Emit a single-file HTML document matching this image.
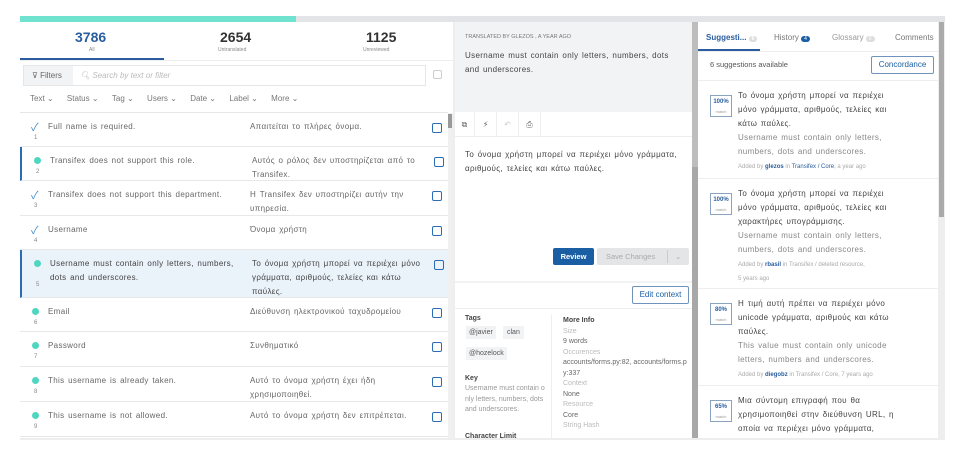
<!DOCTYPE html>
<html><head><meta charset="utf-8"><style>
*{box-sizing:border-box;margin:0;padding:0}
body{width:960px;height:456px;background:#fff;font-family:"Liberation Sans","Noto Sans CJK SC",sans-serif;position:relative;overflow:hidden;color:#555;font-size:8px}
.a{position:absolute}
.t{white-space:nowrap}
.ls{letter-spacing:0.35px;word-spacing:1px}
.row{position:absolute;left:20px;width:428px;border-bottom:1px solid #e8e8e8}
.row .s{position:absolute;left:28px;top:7px;color:#666;font-size:8px;line-height:14px;width:185px;letter-spacing:0.35px;word-spacing:1px}
.row .g{position:absolute;left:230px;top:7px;color:#666;font-size:8px;line-height:14px;width:178px;letter-spacing:0.35px;word-spacing:1px}
.row .n{position:absolute;left:14px;color:#888;font-size:6px}
.row .cb{position:absolute;left:412px;top:10px;width:10px;height:10px;border:1.3px solid #2a6db5;border-radius:2px}
.dot{position:absolute;left:12px;top:10px;width:7px;height:7px;border-radius:50%;background:#4fd6c0}
.chk{position:absolute;left:11px;top:6px;color:#4a90c8;font-size:11px}
.sg{position:absolute;left:698px;width:240px;border-bottom:1px solid #eee}
.sg .b{position:absolute;left:12px;top:14px;width:22px;height:22px;border:1px solid #8aa3c0;font-size:6px;color:#2a5d9f;font-weight:bold;text-align:center;line-height:9px;padding-top:2px}
.sg .x{position:absolute;left:40px;top:8px;width:165px;font-size:8px;line-height:14px;color:#444;letter-spacing:0.35px;word-spacing:1px}
.sg .x .e{color:#888}.sg .x .m{color:#aaa;font-size:6px;line-height:12px;letter-spacing:0;word-spacing:0}
</style></head><body>
<div class="a" style="left:20px;top:16px;width:925px;height:6px;background:#e2e4e8"></div>
<div class="a" style="left:20px;top:16px;width:276px;height:6px;background:#6fe3cf"></div>
<div class="a" style="left:20px;top:438px;width:925px;height:2px;background:#eee"></div>
<div class="a t" style="left:75px;top:29px;font-size:14px;color:#2a5d9f;font-weight:bold">3786</div>
<div class="a t" style="left:89px;top:47px;font-size:5px;color:#888">All</div>
<div class="a t" style="left:220px;top:29px;font-size:14px;color:#333;font-weight:bold">2654</div>
<div class="a t" style="left:218px;top:47px;font-size:5px;color:#888">Untranslated</div>
<div class="a t" style="left:366px;top:29px;font-size:14px;color:#333;font-weight:bold">1125</div>
<div class="a t" style="left:363px;top:47px;font-size:5px;color:#888">Unreviewed</div>
<div class="a" style="left:20px;top:58px;width:144px;height:2px;background:#2a5d9f"></div>
<div class="a" style="left:20px;top:60px;width:433px;height:1px;background:#eee"></div>
<div class="a" style="left:23px;top:65px;width:403px;height:21px;border:1px solid #e6e6e6;background:#fff"></div>
<div class="a t" style="left:24px;top:66px;width:49px;height:19px;background:#f2f3f5;font-size:8px;line-height:19px;padding-left:8px;color:#666">⊽ Filters</div>
<div class="a t" style="left:80px;top:71px;font-size:8px;color:#bbb;font-style:italic">🔍︎ Search by text or filter</div>
<div class="a" style="left:433px;top:70px;width:9px;height:9px;border:1px solid #ccc;border-radius:2px"></div>
<div class="a t" style="left:30px;top:94px;font-size:8px;color:#777">Text ⌄&nbsp;&nbsp;&nbsp;&nbsp;&nbsp;&nbsp;Status ⌄&nbsp;&nbsp;&nbsp;&nbsp;&nbsp;&nbsp;Tag ⌄&nbsp;&nbsp;&nbsp;&nbsp;&nbsp;&nbsp;Users ⌄&nbsp;&nbsp;&nbsp;&nbsp;&nbsp;&nbsp;Date ⌄&nbsp;&nbsp;&nbsp;&nbsp;&nbsp;&nbsp;Label ⌄&nbsp;&nbsp;&nbsp;&nbsp;&nbsp;&nbsp;More ⌄</div>
<div class="a" style="left:20px;top:112px;width:428px;height:1px;background:#e6e6e6"></div>
<div class="row" style="top:113px;height:34px"><span class="chk">✓</span><div class="s">Full name is required.</div><div class="g">Απαιτείται το πλήρες όνομα.</div><div class="n" style="top:22px">1</div><div class="cb"></div></div>
<div class="row" style="top:147px;height:34px;border-left:2px solid #2a6db5"><span class="dot"></span><div class="s">Transifex does not support this role.</div><div class="g">Αυτός ο ρόλος δεν υποστηρίζεται από το Transifex.</div><div class="n" style="top:22px">2</div><div class="cb"></div></div>
<div class="row" style="top:181px;height:35px"><span class="chk">✓</span><div class="s">Transifex does not support this department.</div><div class="g">Η Transifex δεν υποστηρίζει αυτήν την υπηρεσία.</div><div class="n" style="top:22px">3</div><div class="cb"></div></div>
<div class="row" style="top:216px;height:34px"><span class="chk">✓</span><div class="s">Username</div><div class="g">Όνομα χρήστη</div><div class="n" style="top:22px">4</div><div class="cb"></div></div>
<div class="row" style="top:250px;height:48px;background:#eaf2fa;border-left:2px solid #2a6db5"><span class="dot"></span><div class="s" style="color:#444">Username must contain only letters, numbers, dots and underscores.</div><div class="g" style="color:#444">Το όνομα χρήστη μπορεί να περιέχει μόνο γράμματα, αριθμούς, τελείες και κάτω παύλες.</div><div class="n" style="top:32px">5</div><div class="cb"></div></div>
<div class="row" style="top:298px;height:34px"><span class="dot"></span><div class="s">Email</div><div class="g">Διεύθυνση ηλεκτρονικού ταχυδρομείου</div><div class="n" style="top:22px">6</div><div class="cb"></div></div>
<div class="row" style="top:332px;height:35px"><span class="dot"></span><div class="s">Password</div><div class="g">Συνθηματικό</div><div class="n" style="top:22px">7</div><div class="cb"></div></div>
<div class="row" style="top:367px;height:35px"><span class="dot"></span><div class="s">This username is already taken.</div><div class="g">Αυτό το όνομα χρήστη έχει ήδη χρησιμοποιηθεί.</div><div class="n" style="top:22px">8</div><div class="cb"></div></div>
<div class="row" style="top:402px;height:35px"><span class="dot"></span><div class="s">This username is not allowed.</div><div class="g">Αυτό το όνομα χρήστη δεν επιτρέπεται.</div><div class="n" style="top:22px">9</div><div class="cb"></div></div>
<div class="a" style="left:448px;top:113px;width:5px;height:325px;background:#f0f0f0"></div>
<div class="a" style="left:448px;top:114px;width:4px;height:14px;background:#999"></div>
<div class="a" style="left:453px;top:22px;width:2px;height:416px;background:#eee"></div>
<div class="a" style="left:455px;top:22px;width:237px;height:90px;background:#f2f3f5"></div>
<div class="a t" style="left:465px;top:34px;font-size:5.5px;color:#777">TRANSLATED BY GLEZOS , A YEAR AGO</div>
<div class="a ls" style="left:465px;top:49px;width:215px;font-size:8px;line-height:14px;color:#444">Username must contain only letters, numbers, dots and underscores.</div>
<div class="a" style="left:455px;top:112px;width:237px;height:25px;border-bottom:1px solid #eee"></div>
<div class="a t" style="left:455px;top:112px;height:25px;font-size:8px;color:#666;line-height:25px"><span style="display:inline-block;width:20px;text-align:center;border-right:1px solid #eee">⧉</span><span style="display:inline-block;width:22px;text-align:center;border-right:1px solid #eee">⚡︎</span><span style="display:inline-block;width:22px;text-align:center;border-right:1px solid #eee;color:#ccc">↶</span><span style="display:inline-block;width:22px;text-align:center;border-right:1px solid #eee">⎙</span></div>
<div class="a ls" style="left:465px;top:148px;width:215px;font-size:8px;line-height:14px;color:#444">Το όνομα χρήστη μπορεί να περιέχει μόνο γράμματα, αριθμούς, τελείες και κάτω παύλες.</div>
<div class="a t" style="left:553px;top:248px;width:41px;height:17px;background:#1a5fa3;color:#fff;font-size:7.5px;font-weight:bold;text-align:center;line-height:17px;border-radius:2px">Review</div>
<div class="a t" style="left:597px;top:248px;width:92px;height:17px;background:#e4e5e7;color:#aaa;font-size:7.5px;line-height:17px;padding-left:9px;border-radius:2px">Save Changes<span style="position:absolute;left:70px;top:2px;height:13px;border-left:1px solid #ccc;padding-left:7px;line-height:13px">⌄</span></div>
<div class="a" style="left:455px;top:281px;width:237px;height:2px;background:#f2f3f5"></div>
<div class="a t" style="left:632px;top:286px;width:57px;height:18px;border:1px solid #6f93bd;border-radius:2px;color:#1a5fa3;font-size:8px;text-align:center;line-height:16px">Edit context</div>
<div class="a" style="left:455px;top:308px;width:237px;height:1px;background:#eee"></div>
<div class="a" style="left:551px;top:315px;width:1px;height:123px;background:#eee"></div>
<div class="a" style="left:465px;top:315px;font-size:7px;color:#444;font-weight:bold">Tags</div>
<div class="a t" style="left:466px;top:326px;padding:3px 3px;background:#f2f3f5;font-size:7px;color:#555">@javier</div>
<div class="a t" style="left:503px;top:326px;padding:3px 4px;background:#f2f3f5;font-size:7px;color:#555">clan</div>
<div class="a t" style="left:466px;top:347px;padding:3px 3px;background:#f2f3f5;font-size:7px;color:#555">@hozelock</div>
<div class="a" style="left:465px;top:375px;font-size:7px;color:#444;font-weight:bold">Key</div>
<div class="a" style="left:465px;top:384px;width:80px;font-size:7px;line-height:10.5px;color:#999;word-break:break-all">Username must contain only letters, numbers, dots and underscores.</div>
<div class="a t" style="left:465px;top:433px;font-size:7px;color:#444;font-weight:bold">Character Limit</div>
<div class="a" style="left:563px;top:316px;width:125px;font-size:7px;line-height:10.5px;color:#666;word-break:break-all"><b style="color:#444">More Info</b><br><span style="color:#bbb">Size</span><br>9 words<br><span style="color:#bbb">Occurences</span><br>accounts/forms.py:82, accounts/forms.py:337<br><span style="color:#bbb">Context</span><br>None<br><span style="color:#bbb">Resource</span><br>Core<br><span style="color:#bbb">String Hash</span></div>
<div class="a" style="left:692px;top:22px;width:6px;height:416px;background:#a8a8a8"></div>
<div class="a" style="left:692px;top:22px;width:6px;height:145px;background:#bdbdbd"></div>
<div class="a t" style="left:706px;top:33px;font-size:8px;color:#2a5d9f;font-weight:bold">Suggesti... <span style="background:#ddd;color:#fff;border-radius:4px;padding:0 3px;font-size:5px">6</span></div>
<div class="a t" style="left:774px;top:33px;font-size:8px;color:#777">History <span style="background:#1a5fa3;color:#fff;border-radius:4px;padding:0 3px;font-size:5px">4</span></div>
<div class="a t" style="left:832px;top:33px;font-size:8px;color:#999">Glossary <span style="background:#ddd;color:#fff;border-radius:4px;padding:0 3px;font-size:5px">0</span></div>
<div class="a t" style="left:895px;top:33px;font-size:8px;color:#777">Comments</div>
<div class="a" style="left:698px;top:49px;width:62px;height:2px;background:#2a5d9f"></div>
<div class="a" style="left:698px;top:51px;width:240px;height:1px;background:#eee"></div>
<div class="a t" style="left:710px;top:60px;font-size:7.5px;color:#555">6 suggestions available</div>
<div class="a t" style="left:871px;top:56px;width:63px;height:18px;border:1px solid #6f93bd;border-radius:2px;color:#1a5fa3;font-size:8px;text-align:center;line-height:16px">Concordance</div>
<div class="a" style="left:698px;top:80px;width:240px;height:1px;background:#eee"></div>
<div class="sg" style="top:81px;height:98px"><div class="b">100%<br><span style="font-weight:normal;color:#999;font-size:4px">match</span></div><div class="x">Το όνομα χρήστη μπορεί να περιέχει μόνο γράμματα, αριθμούς, τελείες και κάτω παύλες.<br><span class="e">Username must contain only letters, numbers, dots and underscores.</span><br><span class="m">Added by <b style="color:#2a5d9f">glezos</b> in <span style="color:#2a5d9f">Transifex / Core</span>, a year ago</span></div></div>
<div class="sg" style="top:179px;height:110px"><div class="b">100%<br><span style="font-weight:normal;color:#999;font-size:4px">match</span></div><div class="x">Το όνομα χρήστη μπορεί να περιέχει μόνο γράμματα, αριθμούς, τελείες και χαρακτήρες υπογράμμισης.<br><span class="e">Username must contain only letters, numbers, dots and underscores.</span><br><span class="m">Added by <b style="color:#2a5d9f">rbasil</b> in Transifex / deleted resource,<br>5 years ago</span></div></div>
<div class="sg" style="top:289px;height:97px"><div class="b">80%<br><span style="font-weight:normal;color:#999;font-size:4px">match</span></div><div class="x">Η τιμή αυτή πρέπει να περιέχει μόνο unicode γράμματα, αριθμούς και κάτω παύλες.<br><span class="e">This value must contain only unicode letters, numbers and underscores.</span><br><span class="m">Added by <b style="color:#2a5d9f">diegobz</b> in Transifex / Core, 7 years ago</span></div></div>
<div class="sg" style="top:386px;height:52px;border:none"><div class="b">65%<br><span style="font-weight:normal;color:#999;font-size:4px">match</span></div><div class="x">Μια σύντομη επιγραφή που θα χρησιμοποιηθεί στην διεύθυνση URL, η οποία να περιέχει μόνο γράμματα,</div></div>
<div class="a" style="left:938px;top:22px;width:7px;height:416px;background:#eee"></div>
<div class="a" style="left:939px;top:22px;width:5px;height:195px;background:#aaa"></div>
</body></html>
